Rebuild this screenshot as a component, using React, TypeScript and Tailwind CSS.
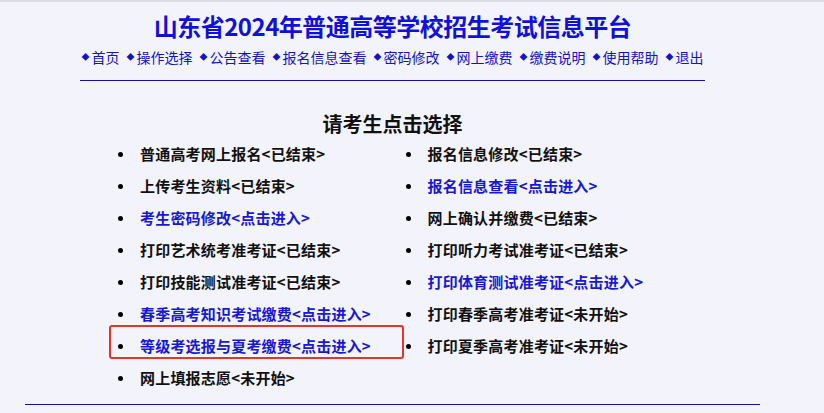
import React from "react";

const left: [string, string, boolean][] = [
  ["普通高考网上报名", "<已结束>", false],
  ["上传考生资料", "<已结束>", false],
  ["考生密码修改", "<点击进入>", true],
  ["打印艺术统考准考证", "<已结束>", false],
  ["打印技能测试准考证", "<已结束>", false],
  ["春季高考知识考试缴费", "<点击进入>", true],
  ["等级考选报与夏考缴费", "<点击进入>", true],
  ["网上填报志愿", "<未开始>", false],
];
const right: [string, string, boolean][] = [
  ["报名信息修改", "<已结束>", false],
  ["报名信息查看", "<点击进入>", true],
  ["网上确认并缴费", "<已结束>", false],
  ["打印听力考试准考证", "<已结束>", false],
  ["打印体育测试准考证", "<点击进入>", true],
  ["打印春季高考准考证", "<未开始>", false],
  ["打印夏季高考准考证", "<未开始>", false],
];

const nav = ["首页", "操作选择", "公告查看", "报名信息查看", "密码修改", "网上缴费", "缴费说明", "使用帮助", "退出"];

function Item({ t, s, link, boxed }: { t: string; s: string; link: boolean; boxed?: boolean }) {
  return (
    <li className="relative flex items-center h-[32px]">
      <span className="w-[5px] h-[5px] rounded-full bg-black ml-[13px] mr-[17px]" />
      <span className={`text-[15px] font-bold tracking-[0.2px] ${link ? "text-[#1717d6]" : "text-[#111]"}`}>
        {t}
        {s}
      </span>
      {boxed && (
        <span className="absolute left-[4px] top-[-5px] w-[295px] h-[34px] border-2 border-[#e8322c] rounded-[3px]" />
      )}
    </li>
  );
}

export default function App() {
  return (
    <div
      className="w-[824px] h-[413px] bg-[#f3f3fc] border-t-2 border-[#dcdce0] overflow-hidden"
      style={{ fontFamily: '"Noto Sans CJK SC", "Noto Sans", sans-serif' }}
    >
      <div className="w-[785px] flex flex-col items-center">
        <h1 className="mt-[6px] text-[24px] leading-[36px] font-bold tracking-[-0.5px] text-[#1010dc]">
          山东省2024年普通高等学校招生考试信息平台
        </h1>
        <div className="mt-[2px] flex gap-[7px] text-[14px] leading-[22px] text-[#1212c8]">
          {nav.map((n) => (
            <span key={n} className="flex items-center">
              <span className="text-[8px] mr-[2px]">◆</span>
              {n}
            </span>
          ))}
        </div>
        <div className="mt-[12px] w-[625px] h-[1px] bg-[#1010a8]" />
        <h2 className="mt-[30px] text-[20px] leading-[26px] font-bold text-[#111]">请考生点击选择</h2>
        <div className="mt-[1px] w-[575px] grid grid-cols-2">
          <ul>
            {left.map(([t, s, l]) => (
              <Item key={t} t={t} s={s} link={l} boxed={t === "等级考选报与夏考缴费"} />
            ))}
          </ul>
          <ul>
            {right.map(([t, s, l]) => (
              <Item key={t} t={t} s={s} link={l} />
            ))}
          </ul>
        </div>
        <div className="mt-[10px] w-[735px] h-[1px] bg-[#1010b0]" />
      </div>
    </div>
  );
}
